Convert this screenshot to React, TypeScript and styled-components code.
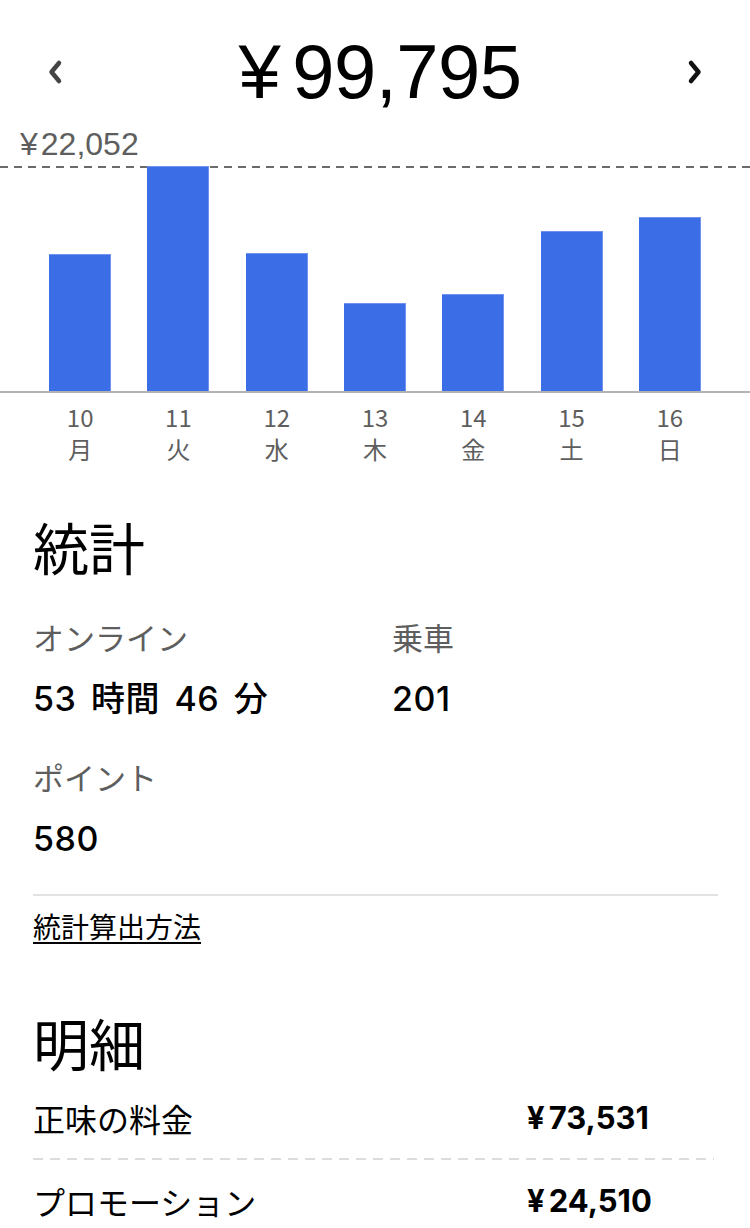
import React from 'react'
import styled, { createGlobalStyle } from 'styled-components'

const GlobalStyle = createGlobalStyle`
  html, body {
    margin: 0;
    padding: 0;
    background: #ffffff;
  }
  body {
    font-family: "Noto Sans", "Noto Sans CJK JP", sans-serif;
    color: #000000;
  }
`

const colors = {
  text: '#000000',
  muted: '#5e5e5e',
  bar: '#3b6de6',
  barEdge: '#6f93ee',
  axis: '#b3b3b3',
  dash: '#6b6b6b',
  divider: '#e2e2e2',
  rowDash: '#dcdcdc',
}

const numFont = `"Liberation Sans", "Noto Sans CJK JP", sans-serif`
const valueFont = `Inter, "Noto Sans CJK JP", sans-serif`
const jpFont = `"Noto Sans CJK JP", "Noto Sans", sans-serif`

const Page = styled.main`
  width: 750px;
  min-height: 1228px;
  overflow: hidden;
`

const Header = styled.header`
  display: flex;
  align-items: center;
  justify-content: space-between;
  padding: 33px 47px 0;
`

const NavButton = styled.button<{ $tone: string }>`
  display: flex;
  align-items: center;
  justify-content: center;
  width: 16px;
  height: 78px;
  padding: 0;
  border: 0;
  background: none;
  color: ${({ $tone }) => $tone};
  cursor: pointer;
`

const Total = styled.h1`
  margin: 0 0 0 10px;
  font-family: ${numFont};
  font-size: 76px;
  font-weight: 400;
  line-height: 78px;
  letter-spacing: -0.5px;
`

const Yen = styled.span<{ $gap: number }>`
  margin-right: ${({ $gap }) => $gap}px;
`

const MaxLabel = styled.div`
  margin-top: 17px;
  padding-left: 20px;
  font-family: ${numFont};
  font-size: 32px;
  line-height: 32px;
  color: ${colors.muted};
`

const Plot = styled.div`
  display: grid;
  grid-template-columns: repeat(7, 1fr);
  align-items: end;
  height: 225px;
  margin-top: 6px;
  padding: 0 31px;
  border-bottom: 2px solid ${colors.axis};
  background-image: repeating-linear-gradient(
    to right,
    ${colors.dash} 0 8px,
    transparent 8px 14px
  );
  background-size: 100% 2px;
  background-repeat: no-repeat;
  background-position: 0 0;
`

const BarSlot = styled.div`
  display: flex;
  justify-content: center;
  align-items: flex-end;
  height: 100%;
`

const Bar = styled.div`
  width: 62px;
  background: ${colors.bar};
  box-shadow: inset 0 1px 0 ${colors.barEdge}, inset -1px 0 0 ${colors.barEdge};
`

const DayRow = styled.div`
  display: grid;
  grid-template-columns: repeat(7, 1fr);
  padding: 8px 31px 0;
`

const Day = styled.div`
  display: flex;
  flex-direction: column;
  align-items: center;
  font-family: ${jpFont};
  font-size: 24px;
  line-height: 32px;
  color: ${colors.muted};
`

const Section = styled.section<{ $top: number }>`
  margin-top: ${({ $top }) => $top}px;
  padding: 0 32px 0 33px;
`

const SectionTitle = styled.h2`
  margin: 0;
  font-family: ${jpFont};
  font-size: 56px;
  font-weight: 400;
  line-height: 58px;
`

const StatGrid = styled.div`
  display: grid;
  grid-template-columns: 359px 1fr;
  row-gap: 34px;
  margin-top: 42px;
`

const Stat = styled.div`
  display: flex;
  flex-direction: column;
  gap: 18px;
`

const StatLabel = styled.div`
  font-family: ${jpFont};
  font-size: 31px;
  line-height: 40px;
  color: ${colors.muted};
`

const StatValue = styled.div`
  font-family: ${valueFont};
  font-size: 34px;
  font-weight: 500;
  line-height: 48px;
  letter-spacing: 0.5px;
  word-spacing: 5px;
`

const Divider = styled.hr`
  margin: 31px 0 0;
  border: 0;
  height: 2px;
  background: ${colors.divider};
`

const MethodLink = styled.a`
  display: inline-block;
  margin-top: 12px;
  font-family: ${jpFont};
  font-size: 28px;
  line-height: 36px;
  color: ${colors.text};
  text-decoration: underline;
  text-decoration-thickness: 2px;
  text-underline-offset: 4px;
`

const Rows = styled.div`
  margin-top: 6px;
  padding-right: 4px;
`

const Row = styled.div<{ $dashed?: boolean }>`
  display: grid;
  grid-template-columns: 494px 1fr;
  align-items: center;
  padding: 21px 0 22px;
  background-image: ${({ $dashed }) =>
    $dashed
      ? `repeating-linear-gradient(to right, ${colors.rowDash} 0 10px, transparent 10px 17px)`
      : 'none'};
  background-size: 100% 2px;
  background-repeat: no-repeat;
  background-position: 0 100%;
`

const RowLabel = styled.div`
  font-family: ${jpFont};
  font-size: 32px;
  line-height: 40px;
`

const RowAmount = styled.div`
  font-family: ${valueFont};
  font-size: 31px;
  font-weight: 700;
  line-height: 40px;
`

const Chevron: React.FC<{ dir: 'left' | 'right' }> = ({ dir }) => (
  <svg width="16" height="26" viewBox="0 0 16 26" fill="none">
    <path
      d={dir === 'left' ? 'M12 4 L4.5 13 L12 22' : 'M4 4 L11.5 13 L4 22'}
      stroke="currentColor"
      strokeWidth="4.5"
      strokeLinecap="round"
      strokeLinejoin="round"
    />
  </svg>
)

const days = [
  { date: '10', weekday: '月', amount: 13410 },
  { date: '11', weekday: '火', amount: 22052 },
  { date: '12', weekday: '水', amount: 13500 },
  { date: '13', weekday: '木', amount: 8610 },
  { date: '14', weekday: '金', amount: 9490 },
  { date: '15', weekday: '土', amount: 15650 },
  { date: '16', weekday: '日', amount: 17083 },
]

const maxAmount = Math.max(...days.map((d) => d.amount))

const breakdown = [
  { label: '正味の料金', amount: '73,531' },
  { label: 'プロモーション', amount: '24,510' },
]

export default function App() {
  return (
    <Page>
      <GlobalStyle />
      <Header>
        <NavButton $tone="#444444" aria-label="前の週">
          <Chevron dir="left" />
        </NavButton>
        <Total>
          <Yen $gap={12}>¥</Yen>99,795
        </Total>
        <NavButton $tone="#111111" aria-label="次の週">
          <Chevron dir="right" />
        </NavButton>
      </Header>

      <MaxLabel>
        <Yen $gap={3}>¥</Yen>22,052
      </MaxLabel>

      <Plot>
        {days.map((d) => (
          <BarSlot key={d.date}>
            <Bar style={{ height: `${(d.amount / maxAmount) * 100}%` }} />
          </BarSlot>
        ))}
      </Plot>
      <DayRow>
        {days.map((d) => (
          <Day key={d.date}>
            <span>{d.date}</span>
            <span>{d.weekday}</span>
          </Day>
        ))}
      </DayRow>

      <Section $top={52}>
        <SectionTitle>統計</SectionTitle>
        <StatGrid>
          <Stat>
            <StatLabel>オンライン</StatLabel>
            <StatValue>53 時間 46 分</StatValue>
          </Stat>
          <Stat>
            <StatLabel>乗車</StatLabel>
            <StatValue>201</StatValue>
          </Stat>
          <Stat>
            <StatLabel>ポイント</StatLabel>
            <StatValue>580</StatValue>
          </Stat>
        </StatGrid>
        <Divider />
        <MethodLink href="#">統計算出方法</MethodLink>
      </Section>

      <Section $top={69}>
        <SectionTitle>明細</SectionTitle>
        <Rows>
          {breakdown.map((item, i) => (
            <Row key={item.label} $dashed={i < breakdown.length - 1}>
              <RowLabel>{item.label}</RowLabel>
              <RowAmount>
                <Yen $gap={4}>¥</Yen>
                {item.amount}
              </RowAmount>
            </Row>
          ))}
        </Rows>
      </Section>
    </Page>
  )
}
